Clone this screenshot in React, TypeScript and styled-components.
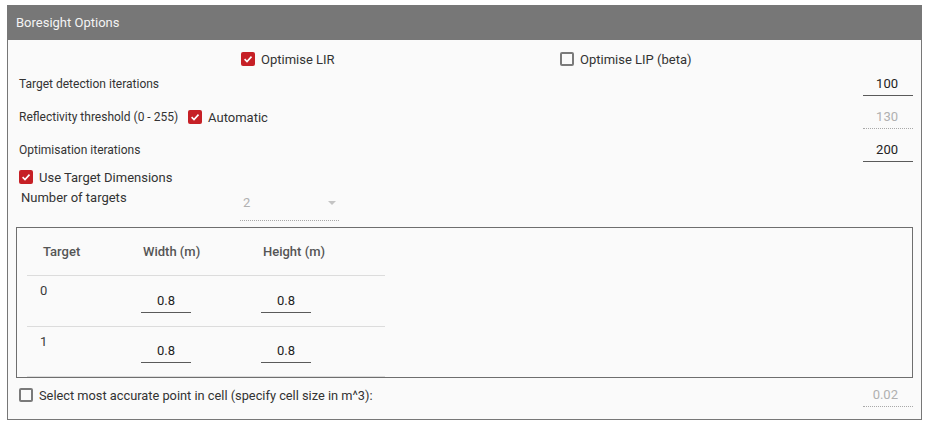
import React from 'react';
import styled, { createGlobalStyle } from 'styled-components';

const GlobalStyle = createGlobalStyle`
  body {
    margin: 0;
    background: #ffffff;
    font-family: Roboto, 'Liberation Sans', sans-serif;
    font-size: 13px;
    color: #333;
  }
`;

const Panel = styled.section`
  width: 915px;
  margin: 5px 5px 0 7px;
`;

const PanelHeader = styled.div`
  height: 35px;
  background: #777777;
  color: #f4f4f4;
  display: flex;
  align-items: center;
  padding-left: 9px;
  font-size: 13px;
`;

const PanelBody = styled.div`
  background: #fafafa;
  border: 1px solid #777777;
  border-top: none;
  padding: 10px 8px 7px 8px;
`;

const OptimiseRow = styled.div`
  display: grid;
  grid-template-columns: 319px auto;
  height: 18px;
  align-items: center;
  padding-left: 225px;
`;

const FieldRow = styled.div<{ $height: number }>`
  display: flex;
  justify-content: space-between;
  align-items: center;
  height: ${(p) => p.$height}px;
  padding-left: 3px;
`;

const LabelGroup = styled.div`
  display: flex;
  align-items: center;
  gap: 10px;
`;

const Label = styled.span`
  font-size: 12px;
  color: #333;
  white-space: nowrap;
`;

const CheckLabel = styled.label<{ $size?: number }>`
  display: flex;
  align-items: center;
  gap: 6px;
  font-size: ${(p) => p.$size ?? 13}px;
  color: #333;
  white-space: nowrap;
  cursor: pointer;
`;

const Box = styled.span<{ $checked: boolean }>`
  width: 14px;
  height: 14px;
  box-sizing: border-box;
  border-radius: 2px;
  display: inline-flex;
  align-items: center;
  justify-content: center;
  background: ${(p) => (p.$checked ? '#c62026' : '#fafafa')};
  border: ${(p) => (p.$checked ? 'none' : '2px solid #7a7a7a')};
`;

const NumberInput = styled.div<{ $disabled?: boolean; $align?: string }>`
  width: 50px;
  height: 23px;
  line-height: 22px;
  box-sizing: border-box;
  text-align: ${(p) => p.$align ?? 'right'};
  padding-right: ${(p) => (p.$align === 'center' ? 0 : 15)}px;
  color: ${(p) => (p.$disabled ? '#b0b0b0' : '#222')};
  border-bottom: 1px ${(p) => (p.$disabled ? 'dotted #a8a8a8' : 'solid #5a5a5a')};
`;

const SelectRow = styled.div`
  display: grid;
  grid-template-columns: 219px 99px;
  align-items: start;
  height: 34px;
  padding-left: 5px;
`;

const SelectLabel = styled.span`
  line-height: 20px;
  color: #333;
`;

const Select = styled.div`
  margin-top: 4px;
  height: 29px;
  box-sizing: border-box;
  padding: 0 3px 7px 3px;
  line-height: 22px;
  color: #b0b0b0;
  border-bottom: 1px dotted #a8a8a8;
  display: flex;
  justify-content: space-between;
  align-items: center;
`;

const Caret = styled.span`
  width: 0;
  height: 0;
  border-left: 4px solid transparent;
  border-right: 4px solid transparent;
  border-top: 4px solid #c4c4c4;
`;

const TableBox = styled.div`
  margin-top: 5px;
  border: 1px solid #6e6e6e;
  height: 149px;
`;

const TargetTable = styled.div`
  width: 358px;
  margin-left: 10px;
`;

const TableRow = styled.div<{ $height: number }>`
  display: grid;
  grid-template-columns: 100px 120px 138px;
  height: ${(p) => p.$height}px;
  box-sizing: border-box;
  border-bottom: 1px solid #dcdcdc;
`;

const HeadCell = styled.div`
  padding-left: 16px;
  align-self: center;
  font-weight: 500;
  color: #555;
`;

const IndexCell = styled.div`
  padding: 7px 0 0 13px;
  line-height: 16px;
  color: #3a3a3a;
`;

const InputCell = styled.div`
  align-self: center;
  padding-left: 14px;
`;

const BottomRow = styled.div`
  display: flex;
  justify-content: space-between;
  align-items: center;
  height: 34px;
  padding-left: 3px;
`;

const Checkbox: React.FC<{ checked: boolean; label: string; size?: number }> = ({ checked, label, size }) => (
  <CheckLabel $size={size}>
    <Box $checked={checked}>
      {checked && (
        <svg width="10" height="10" viewBox="0 0 10 10">
          <path d="M1.6 5.2 L4 7.5 L8.5 2.6" fill="none" stroke="#fff" strokeWidth="1.6" />
        </svg>
      )}
    </Box>
    {label}
  </CheckLabel>
);

const targets = [
  { id: 0, width: '0.8', height: '0.8' },
  { id: 1, width: '0.8', height: '0.8' },
];

const App: React.FC = () => {
  return (
    <>
      <GlobalStyle />
      <Panel>
        <PanelHeader>Boresight Options</PanelHeader>
        <PanelBody>
          <OptimiseRow>
            <Checkbox checked label="Optimise LIR" />
            <Checkbox checked={false} label="Optimise LIP (beta)" />
          </OptimiseRow>

          <FieldRow $height={32}>
            <Label>Target detection iterations</Label>
            <NumberInput>100</NumberInput>
          </FieldRow>

          <FieldRow $height={34}>
            <LabelGroup>
              <Label>Reflectivity threshold (0 - 255)</Label>
              <Checkbox checked label="Automatic" />
            </LabelGroup>
            <NumberInput $disabled>130</NumberInput>
          </FieldRow>

          <FieldRow $height={32}>
            <Label>Optimisation iterations</Label>
            <NumberInput>200</NumberInput>
          </FieldRow>

          <FieldRow $height={22}>
            <Checkbox checked label="Use Target Dimensions" />
          </FieldRow>

          <SelectRow>
            <SelectLabel>Number of targets</SelectLabel>
            <Select>
              <span>2</span>
              <Caret />
            </Select>
          </SelectRow>

          <TableBox>
            <TargetTable>
              <TableRow $height={48}>
                <HeadCell>Target</HeadCell>
                <HeadCell>Width (m)</HeadCell>
                <HeadCell>Height (m)</HeadCell>
              </TableRow>
              {targets.map((t, i) => (
                <TableRow key={t.id} $height={i === 0 ? 51 : 50}>
                  <IndexCell>{t.id}</IndexCell>
                  <InputCell>
                    <NumberInput $align="center">{t.width}</NumberInput>
                  </InputCell>
                  <InputCell>
                    <NumberInput $align="center">{t.height}</NumberInput>
                  </InputCell>
                </TableRow>
              ))}
            </TargetTable>
          </TableBox>

          <BottomRow>
            <Checkbox
              checked={false}
              size={12.8}
              label="Select most accurate point in cell (specify cell size in m^3):"
            />
            <NumberInput $disabled>0.02</NumberInput>
          </BottomRow>
        </PanelBody>
      </Panel>
    </>
  );
};

export default App;
